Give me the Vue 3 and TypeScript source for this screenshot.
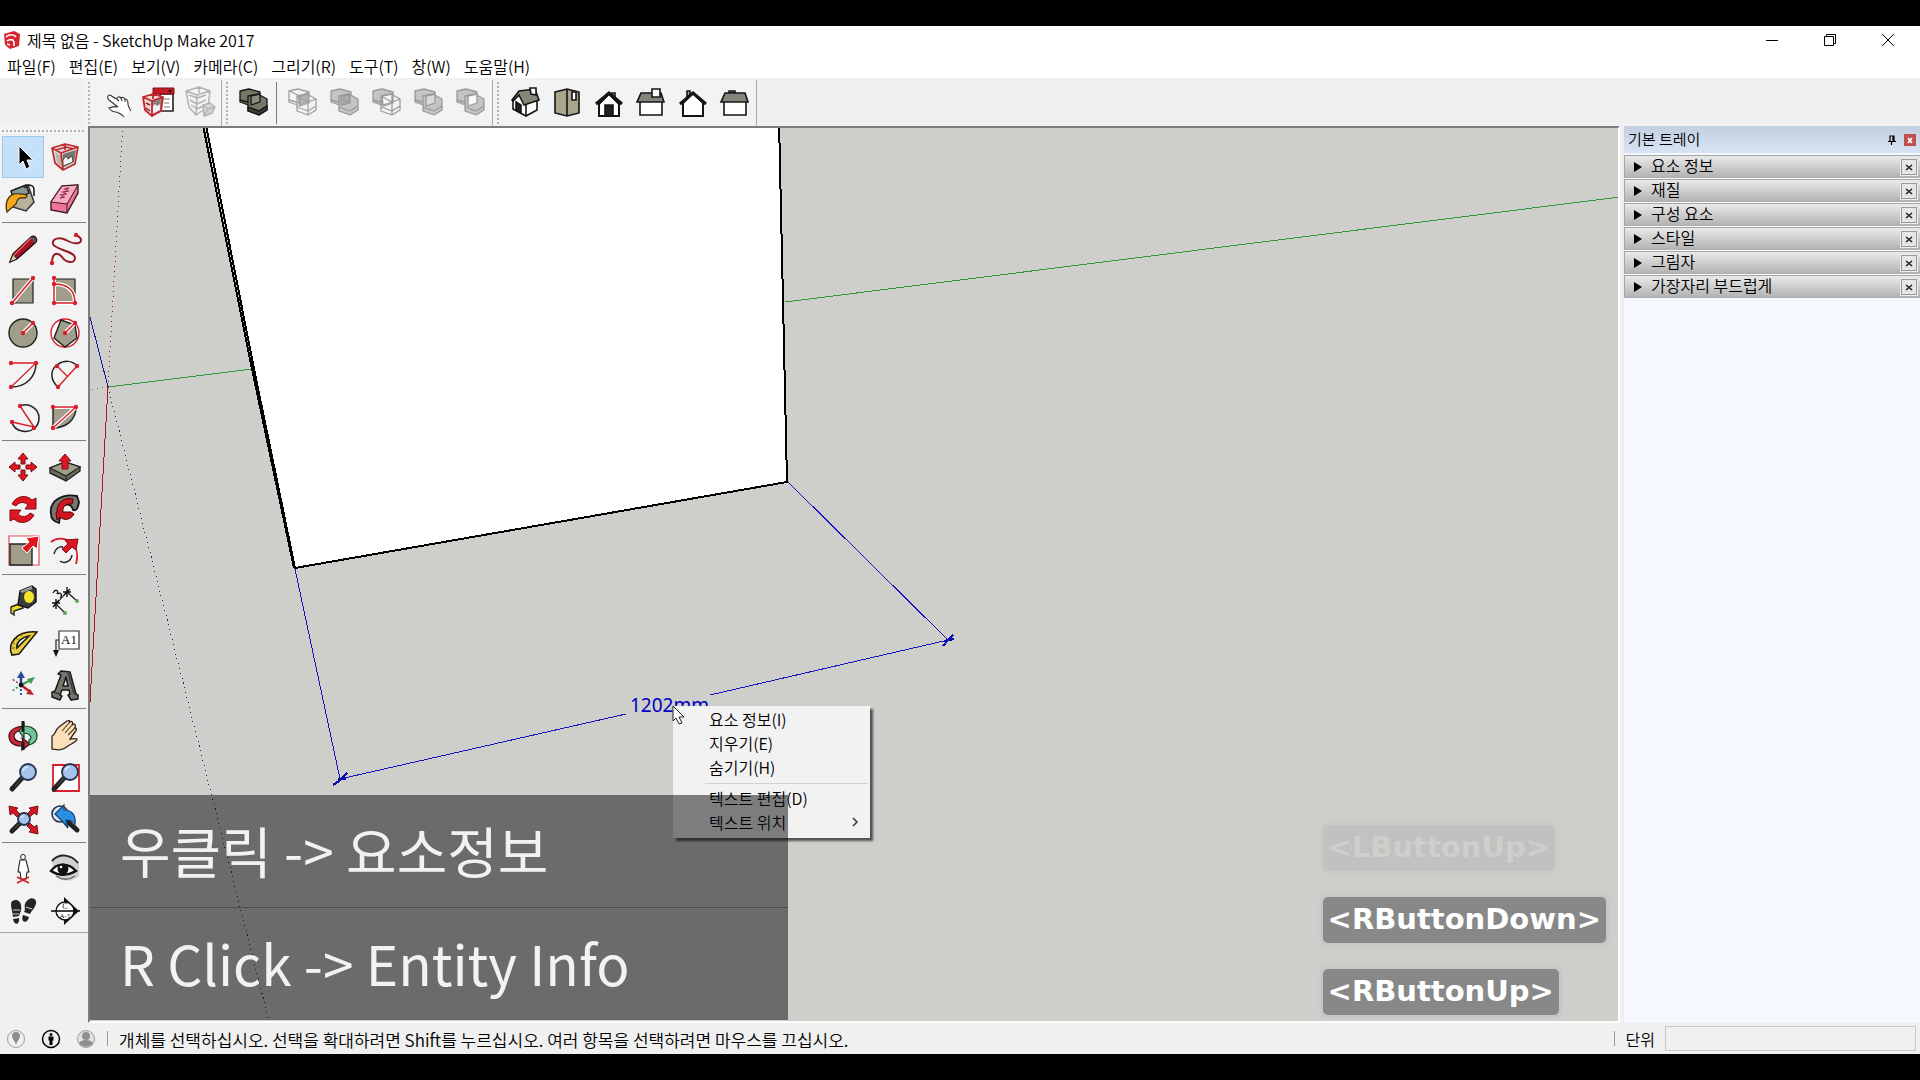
<script setup lang="ts">
interface Tool {
  id: string
  label: string
}

const menus = ['파일(F)', '편집(E)', '보기(V)', '카메라(C)', '그리기(R)', '도구(T)', '창(W)', '도움말(H)']

const topSections: Tool[][][] = [
  [[
    { id: 'interact', label: '상호 작용' },
    { id: 'options', label: '구성 요소 옵션' },
    { id: 'attributes', label: '구성 요소 속성' },
  ]],
  [
    [{ id: 'shell', label: '외부 셸' }],
    [
      { id: 'intersect', label: '교차' },
      { id: 'union', label: '결합' },
      { id: 'subtract', label: '빼기' },
      { id: 'trim', label: '자르기' },
      { id: 'split', label: '분할' },
    ],
  ],
  [[
    { id: 'iso', label: '등각' },
    { id: 'top', label: '위' },
    { id: 'front', label: '앞' },
    { id: 'right', label: '오른쪽' },
    { id: 'back', label: '뒤' },
    { id: 'left', label: '왼쪽' },
  ]],
]

const toolGroups: Tool[][] = [
  [
    { id: 'select', label: '선택' },
    { id: 'component', label: '구성 요소 만들기' },
    { id: 'paint', label: '페인트 통' },
    { id: 'eraser', label: '지우개' },
  ],
  [
    { id: 'pencil', label: '선' },
    { id: 'freehand', label: '자유형' },
    { id: 'rect', label: '직사각형' },
    { id: 'rotrect', label: '회전된 직사각형' },
    { id: 'circle', label: '원' },
    { id: 'polygon', label: '다각형' },
    { id: 'arc', label: '호' },
    { id: 'arc2', label: '2점 호' },
    { id: 'arc3', label: '3점 호' },
    { id: 'pie', label: '파이' },
  ],
  [
    { id: 'move', label: '이동' },
    { id: 'push', label: '밀기/끌기' },
    { id: 'rotate', label: '회전' },
    { id: 'follow', label: '따라가기' },
    { id: 'scale', label: '배율' },
    { id: 'offset', label: '오프셋' },
  ],
  [
    { id: 'tape', label: '줄자' },
    { id: 'dimension', label: '치수' },
    { id: 'protractor', label: '각도기' },
    { id: 'text', label: '텍스트' },
    { id: 'axes', label: '축' },
    { id: 'text3d', label: '3D 텍스트' },
  ],
  [
    { id: 'orbit', label: '궤도' },
    { id: 'pan', label: '이동 보기' },
    { id: 'zoom', label: '확대/축소' },
    { id: 'zoomwin', label: '확대/축소 창' },
    { id: 'extents', label: '범위 확대' },
    { id: 'previous', label: '이전' },
  ],
  [
    { id: 'camera', label: '카메라 배치' },
    { id: 'look', label: '둘러보기' },
    { id: 'walk', label: '걷기' },
    { id: 'section', label: '단면' },
  ],
]

const panels = ['요소 정보', '재질', '구성 요소', '스타일', '그림자', '가장자리 부드럽게']

const contextTop = ['요소 정보(I)', '지우기(E)', '숨기기(H)']

const keys = [
  { name: '<LButtonUp>', faded: true },
  { name: '<RButtonDown>', faded: false },
  { name: '<RButtonUp>', faded: false },
]

// Two overlapping solids shared by every solid-tool icon.
const solids = (back: string, frontFill: string, line: string, extra = '') => `
  <g stroke="${line}" stroke-width="1.3" stroke-linejoin="round">
    <path fill="${back}" d="M7 9l9-2 11 3v11l-9 3-11-4z"/>
    <path fill="none" d="M7 18l11 3 9-3"/>
    <path fill="${frontFill}" d="M15 14l10-2 9 5v11l-8 5-11-4z"/>
    <path fill="none" d="M15 25l11 4 8-5"/>
    ${extra}
  </g>`

const dot = (x: number, y: number) => `<circle cx="${x}" cy="${y}" r="2.2" fill="#d8202c"/>`

const lens = (x: number, y: number, r: number, hx: number, hy: number) => `
  <path d="M${x - r * 0.7} ${y + r * 0.7}L${hx} ${hy}" stroke="#222" stroke-width="5" stroke-linecap="round"/>
  <path d="M${x - r * 0.7} ${y + r * 0.7}L${hx + 3} ${hy - 3}" stroke="#555" stroke-width="1"/>
  <circle cx="${x}" cy="${y}" r="${r}" fill="#a3c3ec" stroke="#26334d" stroke-width="1.8"/>
  <path d="M${x - r + 3} ${y - 1}a${r - 3} ${r - 3} 0 0 1 ${r - 3} -${r - 4}" stroke="#d9e8fb" stroke-width="1.6" fill="none"/>`

const house = (body: string) => `<g stroke="#141414" stroke-width="1.6" stroke-linejoin="miter">${body}</g>`

const icons: Record<string, string> = {
  interact: '<path d="M21 23l-7-5c-2-2-2-4 0-5 2 0 3 2 8 4 0-2 2-3 4-1 1-1 3 0 4 1 2 0 2 2 3 4 0 3 1 5 3 8l-7 6c-3-3-6-3-9-4-3 0-5-2-6-4 2-1 5 0 8 1z" fill="#fff"/><path d="M23 25l-9-7c-2-2-2-5 1-5 2 1 4 3 7 4 0-2 2-3 4-1 1-1 3 0 4 1 2 0 3 2 3 5 0 2 1 4 3 7M23 25c-3-1-6 0-9 1 2 3 4 4 7 4 3 1 6 2 8 5M22 17l2 2M26 16l1 3M30 17v3" fill="none" stroke="#333" stroke-width="1.1"/>',
  options: '<path d="M23 12h13v17H23z" fill="#fff" stroke="#222" stroke-width="1.6"/><path d="M16 6h21v6H16z" fill="#c51a26" stroke="#7d1018"/><path d="M31 8h4l-2 3z" fill="#111"/><path d="M27 17h6M27 21h5M27 25h6" stroke="#777" stroke-width="1"/><path d="M6 15l10-3 10 3-2 14-9 5-7-6z" fill="#f0d9d6"/><path d="M15 19l11-4-2 14-9 5z" fill="#8c807b"/><path d="M15 25l3-3 2 2 3-2v6l-8 4z" fill="#eee"/><path d="M6 15l10-3 10 3-2 14-9 5-7-6zM6 15l9 4 11-4M15 19v15M16 12v5" stroke="#c4242c" stroke-width="1.8" fill="none" stroke-linejoin="round"/><path d="M9 21l4 2M9 26l4 3" stroke="#8d2126" stroke-width="1.5"/>',
  attributes: '<g fill="none" stroke="#b3b3b3" stroke-width="1.5" stroke-linejoin="round"><path d="M7 9l13-4 11 4-2 16-12 8-7-8zM7 9l11 4 13-4M18 13l-1 20M10 13l8 3 9-3M11 18l7 4 9-4M12 23l6 4 8-4M20 5v6"/><path fill="#d6d6d6" d="M24 23l7-2 5 4-3 6-8 3z"/><path d="M24 23l5 4 7-2M29 27l-4 7"/></g>',
  shell: solids('#77776a', '#77776a', '#161616', '<path d="M18 14l9-2v8l-9 3z" fill="#8c8b7c"/><path d="M15 25l11 4 8-5v4l-8 5-11-4z" fill="#3b3b38"/>'),
  intersect: solids('none', 'none', '#a0a0a0', '<path d="M16 14l10-2v8l-8 3z" fill="#b4b4b4"/><path d="M18 24v-9l9-4M26 33V20l8-3M26 20l-11-6M7 9l11 5 9-4"/>'),
  union: solids('#c4c4c4', '#c4c4c4', '#9a9a9a', '<path d="M17 14l9-1v8l-9 2z" fill="#adadad"/><path d="M20 15v5l5-1v-5"/>'),
  subtract: solids('#c4c4c4', 'none', '#9a9a9a', '<path d="M16 14l10-2v8l-9 3z" fill="#f6f6f6"/><path d="M26 33V20l8-3M26 20l-11-6"/>'),
  trim: solids('#c4c4c4', '#c4c4c4', '#9a9a9a', '<path d="M18 14l9-2v9l-9 3z" fill="#d8d8d8"/>'),
  split: solids('#c4c4c4', '#c4c4c4', '#9a9a9a', '<path d="M18 14l9-2v9l-9 3z" fill="#fafafa"/>'),
  iso: house('<path d="M9 18v9l13 7 11-6V18L20 9z" fill="#fff"/><path d="M22 34V22" /><path d="M12 20l5 3v8l-5-3z" fill="#222"/><path d="M8 18l7-9 16-2 4 11-15 5-5-10-6 6z" fill="#86857a"/><path d="M26 6h6v7l-5-1z" fill="#fff"/>'),
  top: house('<path d="M9 10l12-3 12 3v21l-12 3-12-3z" fill="#a8a58c"/><path d="M21 7v27"/><path d="M26 10h4v8h-4z" fill="#fff"/>'),
  front: house('<path d="M24 13v-2h3v5" fill="#aaa"/><path d="M11 22v12h20V22L21 12z" fill="#fff" stroke-width="2"/><path d="M17 23h8v11h-8z" fill="#222"/><path d="M8 22L21 11l13 11" fill="none" stroke-width="3"/>'),
  right: house('<path d="M10 19h22v14H10z" fill="#fff"/><path d="M11 11h20l3 9H7z" fill="#85847a"/><path d="M22 7h8v8h-8z" fill="#fff"/>'),
  back: house('<path d="M15 15V9h3v6" fill="#aaa"/><path d="M11 21v13h20V21L21 11z" fill="#fff" stroke-width="2"/><path d="M8 22L21 11l13 11" fill="none" stroke-width="3"/>'),
  left: house('<path d="M10 19h22v14H10z" fill="#fff"/><path d="M15 9h6v2h-6z" fill="#aaa"/><path d="M11 11h20l3 9H7z" fill="#85847a"/>'),

  select: '<path d="M17 10v19l4-4 3 8 4-2-3-7h6z" fill="#000" stroke="#fff" stroke-width="1"/>',
  component: '<path d="M8 12l13-4 13 3-3 17-12 6-8-7z" fill="#dedad7"/><path d="M19 18l13-4-2 12-12 6z" fill="#77756d"/><path d="M11 16l6 4v10l-4-4z" fill="#b9b4ae"/><path d="M19 24l3-4 2 3 4-3 1 6-5 2-5 2z" fill="#f3f3f3" stroke="#333" stroke-width=".8"/><g fill="none" stroke="#c22a32" stroke-width="1.7" stroke-linejoin="round"><path d="M8 12l13-4 13 3-3 17-12 6-8-7zM8 12l9 5 17-6M17 17l2 17M21 8v6M12 14l10-3 8 2"/></g>',
  paint: '<path d="M14 11l12-4 6 17-8 9-13-4z" fill="#b9b19a" stroke="#333" stroke-width="1.5"/><path d="M9 13l15-6 3 8-15 8z" fill="#849a9b" stroke="#222" stroke-width="1.5"/><path d="M5 34c-3-12 3-20 14-18 5 0 8 2 4 4-6-1-8 1-9 6z" fill="#f5a81c" stroke="#4c3a14" stroke-width="1.4"/><path d="M22 10c4-5 10-3 10 2v6" fill="none" stroke="#222" stroke-width="1.6"/>',
  eraser: '<path d="M7 24L18 8l16-1v8L23 35 7 32z" fill="#ed7596" stroke="#3c1b24" stroke-width="1.4"/><path d="M7 24L18 8l16-1-11 19z" fill="#fcaac1" stroke="#3c1b24" stroke-width="1"/><path d="M23 26v9" stroke="#3c1b24"/><path d="M25 10l-4 1 3 2-5 1 3 2-5 1 3 2-4 1" stroke="#8d3550" fill="none" stroke-width="1.4"/>',
  pencil: '<path d="M8 34l3-8 18-17c3-2 7 1 5 5L15 31z" fill="#a51521" stroke="#260b0d" stroke-width="1.4"/><path d="M8 34l3-8 4 5z" fill="#dfd0a7" stroke="#222"/><path d="M12 27l17-17" stroke="#f15a60" stroke-width="1.6"/><path d="M28 10c3-3 8 1 5 5z" fill="#555"/>',
  freehand: '<path d="M8 35C8 24 14 24 18 29c4 6 13 7 13 1 0-7-20-8-22-14-1-6 7-7 13-4 9 5 16 4 15-1-1-2-3-3-5-4" fill="none" stroke="#981c27" stroke-width="2"/>' + dot(8, 35) + dot(32, 7),
  rect: '<path d="M11 9h20v24H11z" fill="#a09e8b" stroke="#222" stroke-width="1.2"/><path d="M10 33L31 8" stroke="#fff" stroke-width="4"/><path d="M10 33L31 8" stroke="#d8202c" stroke-width="1.6"/>' + dot(10, 33) + dot(31, 8),
  rotrect: '<path d="M11 9h20v24H11z" fill="#a09e8b" stroke="#222" stroke-width="1.2"/><path d="M10 8v25h21C31 20 23 14 10 14" fill="none" stroke="#fff" stroke-width="4"/><path d="M10 8v25h21C31 20 23 14 10 14" fill="none" stroke="#d8202c" stroke-width="1.5"/>' + dot(10, 8) + dot(10, 14) + dot(10, 33) + dot(31, 33),
  circle: '<circle cx="21" cy="21" r="14" fill="#a09e8b" stroke="#222" stroke-width="1.4"/><path d="M21 21l10-10" stroke="#fff" stroke-width="4"/><path d="M21 21l10-10" stroke="#d8202c" stroke-width="1.6"/>' + dot(21, 21) + dot(31, 11),
  polygon: '<circle cx="21" cy="21" r="14" fill="#fff" stroke="#d8202c" stroke-width="1.4"/><path d="M17 8l14 5 2 13-12 9-11-9z" fill="#a09e8b" stroke="#222" stroke-width="1.4"/><path d="M21 21l10-10" stroke="#fff" stroke-width="4"/><path d="M21 21l10-10" stroke="#d8202c" stroke-width="1.6"/>' + dot(21, 21) + dot(31, 11),
  arc: '<path d="M34 9C34 23 24 33 9 33" fill="none" stroke="#222" stroke-width="1.5"/><path d="M9 9h25L9 33" fill="none" stroke="#d8202c" stroke-width="1.3"/>' + dot(9, 9) + dot(34, 9) + dot(9, 33),
  arc2: '<path d="M14 33C6 26 6 16 13 11S28 6 33 12" fill="none" stroke="#222" stroke-width="1.5"/><path d="M14 33l19-21M13 12l11 11" fill="none" stroke="#d8202c" stroke-width="1.4"/>' + dot(13, 12) + dot(33, 12) + dot(14, 33),
  arc3: '<path d="M18 10c9-4 19 3 19 12 0 10-9 15-17 13-6-1-9-5-10-9" fill="none" stroke="#222" stroke-width="1.5"/><path d="M18 10l14 21-22-5" fill="none" stroke="#d8202c" stroke-width="1.4"/>' + dot(18, 10) + dot(10, 26) + dot(32, 32),
  pie: '<path d="M9 11h23c0 13-10 21-23 21z" fill="#a09e8b" stroke="#222" stroke-width="1.4"/><path d="M9 11h23L9 32" fill="none" stroke="#fff" stroke-width="4"/><path d="M9 11h23L9 32" fill="none" stroke="#d8202c" stroke-width="1.4"/>' + dot(9, 11) + dot(32, 11) + dot(9, 32),

  move: [0, 90, 180, 270].map(a => `<path transform="rotate(${a} 21 21)" d="M21 7l5 6h-3v5h-4v-5h-3z" fill="#dd1620" stroke="#7d0c12" stroke-width="1"/>`).join(''),
  push: '<path d="M6 22l15-6 15 5v4L22 35 6 27z" fill="#6c6b60" stroke="#222" stroke-width="1.4"/><path d="M6 22l15-6 15 5-14 9z" fill="#a09e8b" stroke="#222" stroke-width="1.2"/><path d="M22 30v5" stroke="#222"/><path d="M21 8l6 7h-3v8h-6v-8h-3z" fill="#dd1620" stroke="#7d0c12"/>',
  rotate: '<path d="M10 16c4-8 14-10 20-4l4-2v11H23l3-4c-4-4-9-3-12 1z" fill="#dd1620" stroke="#7d0c12"/><path transform="rotate(180 21 21.5)" d="M10 16c4-8 14-10 20-4l4-2v11H23l3-4c-4-4-9-3-12 1z" fill="#dd1620" stroke="#7d0c12"/>',
  follow: '<path d="M7 26C5 13 18 5 33 8l2 6c-1 7-3 9-6 8-1-4-4-6-8-5-6 1-9 7-5 12l-1 6c-4-1-8-4-8-9z" fill="#77756d" stroke="#151515" stroke-width="1.8"/><path d="M13 23c0-9 8-14 16-12l-1 5c-6-1-10 3-9 8h8l3 2c-3 6-10 7-14 3l-3 3-1-7z" fill="#cf1722" stroke="#500" stroke-width="1"/>',
  scale: '<path d="M7 6h30v29H7z" fill="#fff" stroke="#e04c55" stroke-width="1.2"/><path d="M8 14h22v21H8z" fill="#a09e8b" stroke="#222" stroke-width="1.4"/><path d="M37 6l-2 13-4-3-6 7-5-5 7-6-3-4z" fill="#dd1620" stroke="#fff"/>',
  offset: '<path d="M7 12C18 3 38 12 32 34" fill="none" stroke="#dd1620" stroke-width="1.8"/><path d="M10 24c1-5 5-8 9-7M16 31c4 3 11 1 12-6" fill="none" stroke="#222" stroke-width="1.5"/><path d="M34 9l-2 11-4-3-6 6-4-4 6-5-3-4z" fill="#dd1620" stroke="#7d0c12"/>',

  tape: '<path d="M9 27l10-4 2 5-9 3v4l-3-2z" fill="#eedc20" stroke="#222" stroke-width="1.4"/><path d="M18 11l12-5 4 3v13l-8 6-10-3z" fill="#3b3e3f" stroke="#111" stroke-width="1.4"/><path d="M18 11l12-5v3l-10 4z" fill="#9b9b97"/><ellipse cx="27" cy="17" rx="5" ry="6" fill="#f6e32a"/>',
  dimension: '<path d="M12 24l11-12M12 24l9 9M23 12l10 9" fill="none" stroke="#111" stroke-width="1.1"/><path d="M12 19v10M8 23h8M23 7v10M19 12h8M9 27l6-7M20 15l6-6" fill="none" stroke="#111" stroke-width="1.4"/><circle cx="21" cy="33" r="2" fill="#57a954"/><circle cx="33" cy="21" r="2" fill="#57a954"/><path d="M9 13c3-5 6-2 4 1 4-3 6 2 3 4" fill="none" stroke="#111" stroke-width="1.3"/>',
  protractor: '<path d="M10 33C5 22 14 8 35 10L17 32zM15 26c-1-6 5-11 12-12z" fill="#e8cf46" fill-rule="evenodd" stroke="#1e1b0a" stroke-width="1.6"/><path d="M10 20l3 2M13 15l3 3M19 11l1 3M10 26h3" stroke="#6a5b14"/>',
  text: '<path d="M15 9h20v18H15z" fill="#fff" stroke="#333" stroke-width="1.2"/><path d="M15 18h-3v11" fill="none" stroke="#222" stroke-width="1.2"/><path d="M9 28h6l-3 7z" fill="#111"/><text x="25" y="22" text-anchor="middle" font-family="Liberation Serif" font-size="13" fill="#111">A1</text>',
  axes: '<path d="M19 21v-9" stroke="#1d3f8f" stroke-width="2.4"/><path d="M19 7l4 7h-8z" fill="#23489c"/><path d="M19 21l8-4" stroke="#3c9a50" stroke-width="2.2"/><path d="M33 13l-4 7-4-5z" fill="#3c9a50"/><path d="M19 21l8 6" stroke="#b8202b" stroke-width="2.4"/><path d="M32 31l-8-1 4-5z" fill="#b8202b"/><path d="M19 21v12" stroke="#23489c" stroke-width="1.8" stroke-dasharray="2 2"/><path d="M19 21l-9-6" stroke="#b8202b" stroke-width="1.4" stroke-dasharray="2 2"/><path d="M19 21l-9 6" stroke="#3c9a50" stroke-width="1.8" stroke-dasharray="2 2"/><circle cx="19" cy="21" r="2.4" fill="#111"/>',
  text3d: '<path d="M8 28l3-1 6-16-3-1 3-3 9 1 6 22 2 1v4l-7 1-3-5 2-1-1-4h-7l-2 5 2 1-2 4-8-3zM19 22h5l-2-9z" fill="#77756d" fill-rule="evenodd" stroke="#181818" stroke-width="1.5" stroke-linejoin="round"/><path d="M8 28l8 2M24 9l6 21 4 1" stroke="#3a3a36" stroke-width="1.4"/>',

  orbit: '<path d="M21 12v4c-6 1-9 3-9 6 0 4 4 6 9 6l-1-4 8 6-8 6v-4C11 32 7 28 7 22c0-5 5-9 14-10z" fill="#c92a35" stroke="#3b0b0f" stroke-width="1.2"/><path d="M22 12c8 0 13 4 13 10 0 5-4 8-8 9v-5c3-1 3-6-5-7v5l-5-7 5-7z" fill="#74c499" stroke="#123e28" stroke-width="1.2"/><path d="M21 7v11M21 28v8" stroke="#1a1a1a" stroke-width="3"/>',
  pan: '<path d="M8 22c4-2 3-6 7-9l8-6c2-1 4 0 2 2 2-3 5-1 3 2 3-2 4 0 3 3 2 0 2 2 0 4l-5 7c2 0 6-1 7 0 1 2-6 5-9 7-6 5-10 4-16 3z" fill="#fbdfb9" stroke="#2f251b" stroke-width="1.3"/><path d="M25 9l-7 8M28 11l-7 8M31 14l-7 7" stroke="#4c3b28" stroke-width="1.1"/>',
  zoom: lens(26, 16, 8, 10, 33),
  zoomwin: '<path d="M9 9h26v26H9z" fill="#fff" stroke="#d8202c" stroke-width="1.8"/>' + lens(26, 16, 8, 10, 33),
  extents: '<g fill="#d01823" stroke="#600" stroke-width=".8"><path d="M7 8l9 2-2 2 4 4-3 3-4-4-3 2z"/><path d="M36 8l-9 2 2 2-4 4 3 3 4-4 3 2z"/><path d="M36 36l-9-2 2-2-4-4 3-3 4 4 3-2z"/></g>' + lens(22, 21, 6, 10, 33),
  previous: '<circle cx="16" cy="16" r="8" fill="#dbe8f7" stroke="#26334d" stroke-width="1.6"/><path d="M23 23l10 9" stroke="#222" stroke-width="5" stroke-linecap="round"/><path d="M11 16l9-9v5c8 0 12 5 11 14-2-3-5-4-9-4l2 8-6-7z" fill="#2b8fe3" stroke="#13406d" stroke-width="1.2"/>',
  camera: '<ellipse cx="21" cy="9" rx="2.4" ry="2.6" fill="#fff" stroke="#222"/><path d="M18 12h6l3 12h-2l-1 7h-5l-1-7h-2z" fill="#fff" stroke="#222" stroke-width="1.1"/><path d="M15 35l12-6M15 29l12 6" stroke="#d8202c" stroke-width="1.6"/>',
  look: '<path d="M8 14C17 6 27 7 35 14v14c-8 7-18 6-24-1z" fill="#b9b9b9" opacity=".6"/><path d="M8 13C15 5 27 6 34 15" fill="none" stroke="#222" stroke-width="2"/><path d="M7 23c6-9 18-8 25 0-9 5-17 5-25 0z" fill="#fff" stroke="#111" stroke-width="2.4"/><circle cx="19" cy="21" r="5.5" fill="#111"/><circle cx="17" cy="19" r="1.3" fill="#fff"/><path d="M12 28c7 5 13 4 19 0" fill="none" stroke="#666" stroke-width="1.4"/>',
  walk: '<g fill="#242424"><path d="M9 14c0-5 9-6 10 1 1 5-1 8-2 11l-6 1c0-4-2-8-2-13z"/><path d="M11 29l6-1c1 7-5 8-6 1z"/><path d="M23 14c2-6 9-8 11-3 1 5-4 9-6 13l-6-2c2-3 0-5 1-8z"/><path d="M21 25l6 2c-2 8-9 5-6-2z"/></g><path d="M11 20l7 0M24 17l6 2M11 24h6" stroke="#ccc" stroke-width="1.2"/>',
  section: '<path d="M20 7l15 14-15 14z" fill="#111"/><circle cx="21" cy="21" r="9" fill="#fff" stroke="#111" stroke-width="1.4"/><path d="M7 21h29" stroke="#111" stroke-width="1.6"/><text x="21" y="19" text-anchor="middle" font-family="Liberation Serif" font-size="8" fill="#111">C</text><text x="21" y="28" text-anchor="middle" font-family="Liberation Serif" font-size="7" fill="#111">A-5</text>',
}
</script>

<template>
  <div class="screen">
    <div class="letterbox"></div>
    <div class="app">
      <header class="titlebar">
        <svg class="logo" viewBox="0 0 18 20" aria-hidden="true">
          <path d="M1 4l10-3 6 3-1 12-9 3-5-4z" fill="#d9232e" />
          <path d="M3 7c3-3 8-3 10 0M4 11c3-2 6-2 7 1v4M4 14l3 1" stroke="#fff" stroke-width="1.6" fill="none" />
        </svg>
        <h1>제목 없음 - SketchUp Make 2017</h1>
        <div class="window-buttons">
          <button type="button" aria-label="최소화">
            <svg viewBox="0 0 14 14"><path d="M1 7.5h12" /></svg>
          </button>
          <button type="button" aria-label="이전 크기로">
            <svg viewBox="0 0 14 14"><path d="M1.500 3.500h9v9h-9zM3.500 3.500v-2h9v9h-2" /></svg>
          </button>
          <button type="button" aria-label="닫기">
            <svg viewBox="0 0 14 14"><path d="M1 1l12 12M13 1L1 13" /></svg>
          </button>
        </div>
      </header>

      <nav class="menubar">
        <button v-for="m in menus" :key="m" type="button">{{ m }}</button>
      </nav>

      <div class="topbar">
        <div v-for="(section, i) in topSections" :key="i" class="section">
          <span class="grip"></span>
          <div v-for="(group, j) in section" :key="j" class="tool-run">
            <button v-for="t in group" :key="t.id" type="button" class="tool" :aria-label="t.label">
              <svg viewBox="0 0 42 42" fill="none" v-html="icons[t.id]"></svg>
            </button>
          </div>
        </div>
      </div>

      <main class="work">
        <aside class="palette">
          <span class="grip-row"></span>
          <div v-for="(group, i) in toolGroups" :key="i" class="tool-group">
            <button
              v-for="t in group"
              :key="t.id"
              type="button"
              class="tool"
              :class="{ active: t.id === 'select' }"
              :aria-label="t.label"
            >
              <svg viewBox="0 0 42 42" fill="none" v-html="icons[t.id]"></svg>
            </button>
          </div>
        </aside>

        <section class="viewport">
          <svg class="scene" aria-hidden="true">
            <g transform="translate(-90 -128)" fill="none" shape-rendering="crispEdges">
              <path d="M204 120L254 369L295 568l492-86-8-362z" fill="#fff" />
              <path d="M108 387L252 369M785 302L1620 197" stroke="#2f9a35" />
              <path d="M108 387l-18 3" stroke="#2f9a35" stroke-dasharray="1 4" />
              <path d="M108 387L90 702" stroke="#a81820" />
              <path d="M108 387L123 120" stroke="#a81820" stroke-dasharray="1 4" />
              <path d="M108 387L90 317" stroke="#1414a8" />
              <path d="M108 387L269 1021" stroke="#1a1a88" stroke-dasharray="1 4" />
              <path d="M202 120L252 369L294 568" stroke="#000" stroke-width="2" />
              <path d="M205 120L254 369L295 568L787 482L779 120" stroke="#000" stroke-width="2" />
              <path d="M295 569L340 779L626 714M710 695L948 640L788 482" stroke="#1414c0" />
              <path d="M333 785l6-4 8-8M338 779h8M943 646l5-6 5-5M944 641l10-2" stroke="#0c0cb0" stroke-width="2" />
            </g>
          </svg>
          <span class="dimension">1202mm</span>

          <div class="context-menu" role="menu">
            <button v-for="c in contextTop" :key="c" type="button" role="menuitem">{{ c }}</button>
            <hr />
            <button type="button" role="menuitem">텍스트 편집(D)</button>
            <button type="button" role="menuitem">
              텍스트 위치
              <svg viewBox="0 0 8 12" aria-hidden="true"><path d="M2 2l4 4-4 4" fill="none" stroke="#333" stroke-width="1.5" /></svg>
            </button>
          </div>

          <svg class="cursor" viewBox="0 0 14 20" aria-hidden="true">
            <path d="M1 1v15l3-3 3 6 3-1-3-6h5z" fill="#fff" stroke="#222" />
          </svg>

          <div class="caption">
            <p>우클릭 -&gt; 요소정보</p>
            <p>R Click -&gt; Entity Info</p>
          </div>

          <div class="keys">
            <kbd v-for="k in keys" :key="k.name" :class="{ faded: k.faded }">{{ k.name }}</kbd>
          </div>
        </section>

        <aside class="tray">
          <header class="tray-title">
            <h2>기본 트레이</h2>
            <button type="button" class="pin" aria-label="고정">
              <svg viewBox="0 0 10 12"><path d="M3 7V2h4v5M1 7.500h8M4.500 8v3M6 2v5" stroke="#000" stroke-width="1.200" fill="none" /></svg>
            </button>
            <button type="button" class="tray-close" aria-label="트레이 닫기">
              <svg viewBox="0 0 12 12"><path d="M4 4l4 5M8 4L4 9" stroke="#fff" stroke-width="1.6" /></svg>
            </button>
          </header>
          <div v-for="p in panels" :key="p" class="panel">
            <button type="button" class="panel-toggle">
              <svg viewBox="0 0 8 10" aria-hidden="true"><path d="M0 0l8 5-8 5z" /></svg>
              <span>{{ p }}</span>
            </button>
            <button type="button" class="panel-close" :aria-label="p + ' 닫기'">
              <svg viewBox="0 0 14 14"><path d="M4 5l6 5M10 5l-6 5" stroke="#222" stroke-width="1.6" /></svg>
            </button>
          </div>
        </aside>
      </main>

      <footer class="statusbar">
        <svg viewBox="0 0 20 20" aria-hidden="true">
          <circle cx="10" cy="10" r="8.500" fill="none" stroke="#a0a0a0" />
          <path d="M10 16C9 12 6 10 6 7a4 4 0 0 1 8 0c0 3-3 5-4 9z" fill="#8c8c8c" />
        </svg>
        <svg viewBox="0 0 20 20" aria-hidden="true">
          <circle cx="10" cy="10" r="8.500" fill="none" stroke="#000" stroke-width="1.500" />
          <circle cx="10" cy="5.500" r="1.500" /><path d="M7.500 7.500h5v4h-1V16h-3v-4.500h-1z" />
        </svg>
        <svg viewBox="0 0 20 20" aria-hidden="true">
          <circle cx="10" cy="10" r="8.500" fill="#e2e2e2" stroke="#a0a0a0" />
          <circle cx="10" cy="7" r="4" fill="#8f8f8f" /><path d="M3 14c2-4 12-4 14 0-3 5-11 5-14 0z" fill="#8f8f8f" />
        </svg>
        <span class="tick"></span>
        <p>개체를 선택하십시오. 선택을 확대하려면 Shift를 누르십시오. 여러 항목을 선택하려면 마우스를 끄십시오.</p>
        <span class="tick"></span>
        <label for="measure">단위</label>
        <input id="measure" type="text" />
      </footer>
    </div>
    <div class="letterbox"></div>
  </div>
</template>

<style>
body {
  margin: 0;
  background: #000;
}
</style>

<style scoped>
.screen {
  min-height: 100vh;
  display: flex;
  flex-direction: column;
  font: 350 16px/24px "Noto Sans CJK KR", sans-serif;
  color: #000;
}
.letterbox {
  height: 26px;
  background: #000;
}
.app {
  flex: 1;
  display: flex;
  flex-direction: column;
  background: #f0f0f0;
}
button {
  margin: 0;
  padding: 0;
  border: 0;
  background: none;
  font: inherit;
  color: inherit;
  text-align: left;
}
svg {
  display: block;
  flex: none;
}
h1, h2, p {
  margin: 0;
  font: inherit;
}

.titlebar {
  display: flex;
  align-items: center;
  height: 28px;
  padding: 0 3px;
  background: #fff;
}
.logo {
  width: 18px;
  height: 20px;
  margin-right: 6px;
}
.titlebar h1 {
  flex: 1;
}
.window-buttons {
  display: flex;
}
.window-buttons button {
  width: 58px;
  display: grid;
  place-items: center;
}
.window-buttons svg {
  width: 14px;
  height: 14px;
  fill: none;
  stroke: #000;
}

.menubar {
  display: flex;
  gap: 13px;
  height: 24px;
  padding-left: 7px;
  background: #fff;
}

.topbar {
  display: flex;
  height: 48px;
  box-sizing: border-box;
  padding: 2px 0 0 84px;
}
.section {
  display: flex;
  align-items: center;
  background: #f4f3f4;
  border-right: 1px solid #a8a8a8;
}
.grip {
  width: 2px;
  height: 42px;
  margin: 0 5px 0 4px;
  background: repeating-linear-gradient(#b4b4b4 0 2px, transparent 2px 4px);
}
.tool-run {
  display: flex;
}
.tool-run + .tool-run {
  margin-left: 1px;
  padding-left: 5px;
  border-left: 1px solid #777;
}
.tool {
  width: 42px;
  height: 42px;
}
.tool svg {
  width: 42px;
  height: 42px;
}
.tool.active {
  background: #c5e0f8;
  box-shadow: inset 0 0 0 1px #98caf2;
}

.work {
  flex: 1;
  display: grid;
  grid-template-columns: 88px 1fr 300px;
}
.palette {
  align-self: start;
  padding: 4px 2px 0;
  background: #f4f3f4;
  border-bottom: 1px solid #a8a8a8;
}
.grip-row {
  display: block;
  height: 2px;
  margin-bottom: 4px;
  background: repeating-linear-gradient(90deg, #b4b4b4 0 2px, transparent 2px 4px);
}
.tool-group {
  display: grid;
  grid-template-columns: 42px 42px;
}
.tool-group + .tool-group {
  margin-top: 2px;
  padding-top: 5px;
  border-top: 1px solid #808080;
}

.viewport {
  position: relative;
  overflow: hidden;
  background: #cecfca;
  border: 2px solid;
  border-color: #7c7c7c #fff #fff #7c7c7c;
}
.scene {
  position: absolute;
  inset: 0;
  width: 100%;
  height: 100%;
}
.dimension {
  position: absolute;
  left: 540px;
  top: 565px;
  font-family: "Noto Sans", sans-serif;
  font-weight: 400;
  font-size: 19px;
  color: #0000c4;
}
.context-menu {
  position: absolute;
  left: 583px;
  top: 578px;
  width: 197px;
  box-sizing: border-box;
  padding: 2px 2px 3px;
  background: #f2f2f2;
  box-shadow: 3px 3px 2px rgba(0, 0, 0, 0.6);
}
.context-menu button {
  display: flex;
  align-items: center;
  justify-content: space-between;
  width: 100%;
  height: 24px;
  padding: 0 9px 2px 34px;
}
.context-menu svg {
  width: 8px;
  height: 12px;
}
.context-menu hr {
  height: 1px;
  margin: 3px 0 3px 30px;
  border: 0;
  background: #d0d0d0;
}
.cursor {
  position: absolute;
  left: 582px;
  top: 577px;
  width: 14px;
  height: 20px;
}
.caption {
  position: absolute;
  left: 0;
  bottom: 1px;
  width: 698px;
  background: rgba(8, 8, 14, 0.5);
  color: #f2f2f2;
  font-weight: 400;
  font-size: 55px;
}
.caption p {
  height: 112px;
  padding-left: 30px;
  line-height: 108px;
  white-space: nowrap;
}
.caption p + p {
  border-top: 1px solid #4c4c4c;
}
.keys {
  position: absolute;
  right: 12px;
  bottom: 6px;
  display: flex;
  flex-direction: column;
  align-items: flex-start;
  gap: 26px;
}
kbd {
  padding: 0 5px 2px;
  border-radius: 5px;
  background: #888;
  box-shadow: 0 0 3px 3px #c5c5c6;
  color: #fff;
  font: 700 29px/44px "DejaVu Sans", sans-serif;
}
kbd.faded {
  background: #c1c1bf;
  box-shadow: 0 0 3px 3px #cacac7;
  color: #cececc;
}

.tray {
  margin-left: 4px;
  background: #f5f8ff;
}
.tray-title {
  display: flex;
  align-items: center;
  height: 27px;
  margin-bottom: 2px;
  padding: 0 4px;
  background: linear-gradient(#c2cfdf, #d8e4f5);
}
.tray-title h2 {
  flex: 1;
  padding-bottom: 2px;
  font-size: 15px;
}
.pin svg {
  width: 10px;
  height: 12px;
}
.pin {
  margin-right: 7px;
}
.tray-close {
  background: #c0504f;
}
.tray-close svg {
  width: 12px;
  height: 12px;
}
.panel {
  display: flex;
  align-items: center;
  height: 23px;
  margin-bottom: 1px;
  padding: 0 3px 0 9px;
  box-sizing: border-box;
  border-top: 1px solid #a6a6a6;
  border-left: 1px solid #a6a6a6;
  background: linear-gradient(#eaeaea, #b0b0b0);
}
.panel-toggle {
  flex: 1;
  display: flex;
  align-items: center;
  gap: 9px;
  line-height: 20px;
}
.panel-toggle span {
  padding-bottom: 4px;
}
.panel-toggle svg {
  width: 8px;
  height: 10px;
}
.panel-close {
  border: 1px solid #999;
  outline: 1px solid #eee;
  background: #e6e6e6;
}
.panel-close svg {
  width: 14px;
  height: 14px;
}

.statusbar {
  display: flex;
  align-items: center;
  height: 31px;
  padding: 0 4px 0 6px;
}
.statusbar svg {
  width: 20px;
  height: 20px;
  margin-right: 15px;
}
.statusbar svg + .tick {
  margin-left: -4px;
}
.statusbar p {
  flex: 1;
  padding-top: 2px;
  white-space: nowrap;
  font-size: 17px;
}
.tick {
  width: 1px;
  height: 15px;
  margin-right: 11px;
  background: #999;
}
.statusbar label {
  margin-right: 10px;
}
.statusbar input {
  width: 251px;
  height: 25px;
  box-sizing: border-box;
  border: 1px solid #c8c8c8;
  background: #f0f0f0;
  font: inherit;
}
</style>
